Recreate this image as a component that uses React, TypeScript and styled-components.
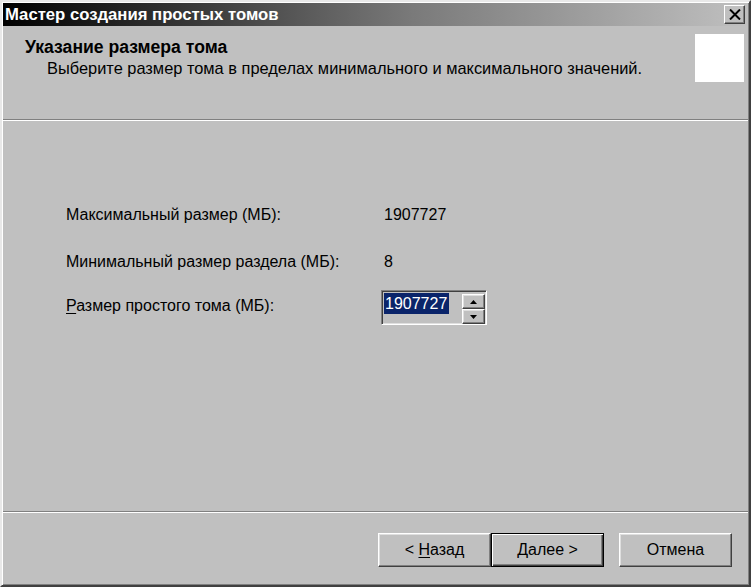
import React from "react";
import styled, { createGlobalStyle } from "styled-components";

const Global = createGlobalStyle`
  *, *::before, *::after { box-sizing: border-box; }
  html, body { margin: 0; padding: 0; background: #c0c0c0; }
  body { font-family: "Liberation Sans", Arial, sans-serif; }
`;

const Window = styled.div`
  width: 751px;
  height: 587px;
  background: #c0c0c0;
  border-style: solid;
  border-width: 2px;
  border-color: #e8e8e8 #404040 #404040 #e8e8e8;
  box-shadow: inset 1px 1px 0 #ffffff, inset -1px -1px 0 #808080;
  padding: 1px;
  display: flex;
  flex-direction: column;
  color: #000;
`;

const TitleBar = styled.div`
  height: 23px;
  flex: none;
  background: linear-gradient(to right, #000000 0%, #7a7a7a 55%, #c0c0c0 100%);
  display: flex;
  align-items: center;
  justify-content: space-between;
  padding: 0 2px 0 2px;
`;

const TitleText = styled.span`
  color: #fff;
  font-weight: bold;
  font-size: 16.7px;
`;

const CloseButton = styled.div`
  width: 21px;
  height: 19px;
  margin-right: 1px;
  background: #c0c0c0;
  border-style: solid;
  border-width: 1px;
  border-color: #ffffff #404040 #404040 #ffffff;
  box-shadow: inset -1px -1px 0 #808080;
  display: flex;
  align-items: center;
  justify-content: center;
`;

const Header = styled.div`
  height: 93px;
  flex: none;
  display: flex;
  justify-content: space-between;
  padding: 0 4px 0 22px;
`;

const HeaderText = styled.div`
  padding-top: 12px;
`;

const HeaderTitle = styled.div`
  font-weight: bold;
  font-size: 17.6px;
  line-height: 19px;
`;

const HeaderSub = styled.div`
  font-size: 16.4px;
  line-height: 19px;
  margin-top: 2px;
  padding-left: 22px;
`;

const Logo = styled.div`
  width: 49px;
  height: 48px;
  background: #fff;
  margin-top: 8px;
`;

const Divider = styled.div`
  height: 2px;
  flex: none;
  background: #808080;
  border-bottom: 1px solid #ffffff;
`;

const Content = styled.div`
  flex: 1;
  display: flex;
  flex-direction: column;
  padding: 85px 0 0 63px;
  font-size: 16px;
`;

const Row = styled.div<{ $gap: number }>`
  display: grid;
  grid-template-columns: 318px auto;
  align-items: center;
  margin-top: ${(p) => p.$gap}px;
  line-height: 17px;
`;

const SpinLabel = styled.div`
  align-self: start;
  padding-top: 7px;
`;

const SpinBox = styled.div`
  width: 106px;
  height: 35px;
  margin-left: -3px;
  border-style: solid;
  border-width: 1px;
  border-color: #808080 #ffffff #ffffff #808080;
  box-shadow: inset 1px 1px 0 #404040, inset -1px -1px 0 #dfdfdf;
  background: #c0c0c0;
  display: flex;
  align-items: flex-start;
  justify-content: space-between;
  padding: 2px 1px 0 2px;
`;

const Selected = styled.span`
  background: #0a246a;
  color: #fff;
  font-size: 16px;
  line-height: 21px;
  padding: 0 2px 0 1px;
`;

const SpinButtons = styled.div`
  display: flex;
  flex-direction: column;
  margin-top: 1px;
`;

const SpinBtn = styled.div`
  width: 23px;
  height: 15px;
  background: #c0c0c0;
  border-style: solid;
  border-width: 1px;
  border-color: #ffffff #404040 #404040 #ffffff;
  box-shadow: inset -1px -1px 0 #808080, inset 1px 1px 0 #dfdfdf;
  display: flex;
  align-items: center;
  justify-content: center;
`;

const Footer = styled.div`
  height: 71px;
  flex: none;
  display: flex;
  justify-content: flex-end;
  align-items: flex-start;
  padding: 20px 16px 0 0;
`;

const ButtonGroup = styled.div`
  display: flex;
  margin-right: 15px;
`;

const Button = styled.div<{ $default?: boolean }>`
  width: 113px;
  height: 34px;
  background: #c0c0c0;
  font-size: 16px;
  display: flex;
  align-items: center;
  justify-content: center;
  border-style: solid;
  border-width: 1px;
  border-color: ${(p) => (p.$default ? "#000000" : "#ffffff #404040 #404040 #ffffff")};
  box-shadow: ${(p) =>
    p.$default
      ? "inset 1px 1px 0 #ffffff, inset -1px -1px 0 #404040, inset -2px -2px 0 #808080"
      : "inset -1px -1px 0 #808080, inset 1px 1px 0 #dfdfdf"};
`;

const U = styled.span`
  text-decoration: underline;
  text-underline-offset: 2px;
`;

const Arrow = ({ up }: { up?: boolean }) => (
  <svg width="7" height="4" viewBox="0 0 7 4">
    {up ? <path d="M3.5 0 L7 4 L0 4 Z" fill="#000" /> : <path d="M0 0 L7 0 L3.5 4 Z" fill="#000" />}
  </svg>
);

export default function App() {
  return (
    <>
      <Global />
      <Window>
        <TitleBar>
          <TitleText>Мастер создания простых томов</TitleText>
          <CloseButton>
            <svg width="12" height="11" viewBox="0 0 12 11">
              <path d="M1 0.5 L11 10.5 M11 0.5 L1 10.5" stroke="#000" strokeWidth="2" />
            </svg>
          </CloseButton>
        </TitleBar>
        <Header>
          <HeaderText>
            <HeaderTitle>Указание размера тома</HeaderTitle>
            <HeaderSub>Выберите размер тома в пределах минимального и максимального значений.</HeaderSub>
          </HeaderText>
          <Logo />
        </Header>
        <Divider />
        <Content>
          <Row $gap={0}>
            <div>Максимальный размер (МБ):</div>
            <div>1907727</div>
          </Row>
          <Row $gap={30}>
            <div>Минимальный размер раздела (МБ):</div>
            <div>8</div>
          </Row>
          <Row $gap={20}>
            <SpinLabel>
              <U>Р</U>азмер простого тома (МБ):
            </SpinLabel>
            <SpinBox>
              <Selected>1907727</Selected>
              <SpinButtons>
                <SpinBtn>
                  <Arrow up />
                </SpinBtn>
                <SpinBtn>
                  <Arrow />
                </SpinBtn>
              </SpinButtons>
            </SpinBox>
          </Row>
        </Content>
        <Divider />
        <Footer>
          <ButtonGroup>
            <Button>
              &lt;&nbsp;<U>Н</U>азад
            </Button>
            <Button $default>
              <span>
                <U>Д</U>алее &gt;
              </span>
            </Button>
          </ButtonGroup>
          <Button>Отмена</Button>
        </Footer>
      </Window>
    </>
  );
}
